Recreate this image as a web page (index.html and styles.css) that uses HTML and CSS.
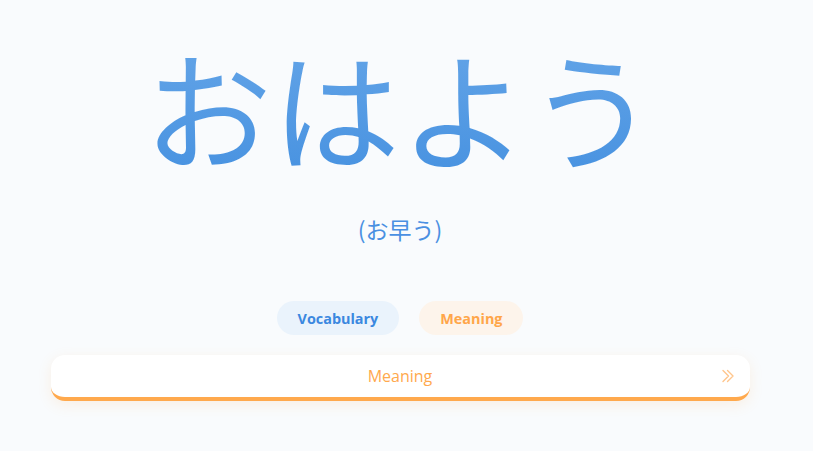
FILE: index.html
```html
<!DOCTYPE html>
<html lang="ja">
<head>
<meta charset="utf-8">
<link rel="stylesheet" href="styles.css">
</head>
<body>
<main class="card">
  <div class="word">おはよう</div>
  <div class="reading">(お早う)</div>
  <div class="tags">
    <span class="tag tag-vocab">Vocabulary</span>
    <span class="tag tag-meaning">Meaning</span>
  </div>
  <button class="reveal">
    <span class="reveal-label">Meaning</span>
    <svg class="reveal-icon" viewBox="0 0 16 16" width="16" height="16" aria-hidden="true">
      <path d="M3 2.5 L8.5 8 L3 13.5 M7.5 2.5 L13 8 L7.5 13.5" fill="none" stroke="#ffc58c" stroke-width="1.4" stroke-linecap="round" stroke-linejoin="round"/>
    </svg>
  </button>
</main>
</body>
</html>
```

FILE: styles.css
```css
html, body {
  margin: 0;
  padding: 0;
  background: #f9fbfd;
  height: 100%;
}
body {
  font-family: "Open Sans", "Noto Sans", sans-serif;
}
.card {
  width: 800px;
  display: flex;
  flex-direction: column;
  align-items: center;
  padding-top: 26px;
}
.word {
  font-family: "Noto Sans CJK JP", sans-serif;
  font-size: 128px;
  line-height: 160px;
  font-weight: 400;
  background: linear-gradient(180deg, #66a6e8 0%, #4691e0 100%);
  -webkit-background-clip: text;
  background-clip: text;
  color: transparent;
}
.reading {
  margin-top: 28px;
  font-family: "Noto Sans CJK JP", sans-serif;
  font-size: 23px;
  line-height: 30px;
  color: #4a90e2;
}
.tags {
  margin-top: 57px;
  display: flex;
  gap: 20px;
}
.tag {
  height: 34px;
  border-radius: 17px;
  display: flex;
  align-items: center;
  padding: 0 21px;
  font-size: 14.4px;
  font-weight: 700;
}
.tag-vocab {
  background: #eaf3fc;
  color: #3b88e0;
}
.tag-meaning {
  background: #fdf4eb;
  color: #ffa64a;
}
.reveal {
  margin-top: 20px;
  width: 699px;
  height: 46px;
  box-sizing: border-box;
  border: none;
  border-bottom: 4px solid #ffa94d;
  border-radius: 14px;
  background: #fff;
  box-shadow: 0 4px 14px rgba(255, 169, 77, 0.14);
  position: relative;
  display: flex;
  align-items: center;
  justify-content: center;
  font-family: "Open Sans", sans-serif;
  font-size: 16px;
  color: #ffa94d;
  padding: 0;
}
.reveal-icon {
  position: absolute;
  right: 14px;
  top: 13px;
}
```
